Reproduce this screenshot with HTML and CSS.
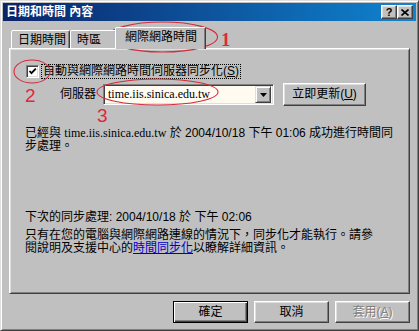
FILE: index.html
```html
<!DOCTYPE html>
<html>
<head>
<meta charset="utf-8">
<title>日期和時間 內容</title>
<link rel="stylesheet" href="styles.css">
</head>
<body>
<div class="window">
  <div class="titlebar">
    <span class="title">日期和時間 內容</span>
    <div class="caption-btns">
      <span class="cap-btn help">?</span>
      <span class="cap-btn close"><svg width="8" height="7" viewBox="0 0 8 7"><path d="M0.5 0.5 L7.5 6.5 M7.5 0.5 L0.5 6.5" stroke="#000" stroke-width="1.6" fill="none"/></svg></span>
    </div>
  </div>
  <div class="body">
    <div class="tabs">
      <div class="tab tab1">日期時間</div>
      <div class="tab tab2">時區</div>
      <div class="tab active">網際網路時間</div>
    </div>
    <div class="panel">
      <div class="check-row">
        <span class="checkbox"><svg width="9" height="9" viewBox="0 0 9 9"><path d="M1.5 4 L3.5 6.2 L7.8 1.6" stroke="#000" stroke-width="1.8" fill="none"/></svg></span>
        <span class="check-label">自動與網際網路時間伺服器同步化(<u>S</u>)</span>
      </div>
      <div class="server-row">
        <span class="server-label">伺服器</span>
        <div class="combo">
          <span class="combo-text">time.iis.sinica.edu.tw</span>
          <span class="combo-btn"><svg width="7" height="4" viewBox="0 0 7 4"><path d="M0 0 H7 L3.5 4 Z" fill="#000"/></svg></span>
        </div>
        <span class="btn update">立即更新(<u>U</u>)</span>
      </div>
      <p class="status">已經與 <span class="serif">time.iis.sinica.edu.tw</span> 於 2004/10/18 下午 01:06 成功進行時間同<br>步處理。</p>
      <p class="next">下次的同步處理: 2004/10/18 於 下午 02:06</p>
      <p class="info">只有在您的電腦與網際網路連線的情況下，同步化才能執行。請參<br>閱說明及支援中心的<a class="link" href="#">時間同步化</a>以瞭解詳細資訊。</p>
    </div>
    <div class="buttons">
      <span class="btn default">確定</span>
      <span class="btn">取消</span>
      <span class="btn disabled">套用(<u>A</u>)</span>
    </div>
  </div>
</div>
<svg class="annot" width="419" height="331" viewBox="0 0 419 331">
  <ellipse cx="162.5" cy="37" rx="55" ry="15" fill="none" stroke="#d42a3a" stroke-width="1.1"/>
  <text x="221" y="46" class="num serifnum">1</text>
  <ellipse cx="32" cy="71.5" rx="18" ry="11.5" fill="none" stroke="#d42a3a" stroke-width="1.1"/>
  <text x="25" y="102" class="num">2</text>
  <ellipse cx="157.5" cy="92" rx="60.5" ry="13" fill="none" stroke="#d42a3a" stroke-width="1.1"/>
  <text x="97" y="122" class="num">3</text>
</svg>
</body>
</html>
```

FILE: styles.css
```css
* { box-sizing: border-box; }
html, body { margin: 0; padding: 0; }
body {
  position: relative;
  width: 419px;
  height: 331px;
  overflow: hidden;
  background: #c0c0c0;
  font-family: "Liberation Sans", "Noto Sans CJK TC", sans-serif;
  font-size: 12px;
  color: #000;
}
.window {
  width: 419px;
  height: 331px;
  background: #c0c0c0;
  border: 1px solid;
  border-color: #dfdfdf #404040 #404040 #dfdfdf;
  box-shadow: inset 1px 1px #fff, inset -1px -1px #808080;
  padding: 2px;
  display: flex;
  flex-direction: column;
}
.titlebar {
  height: 18px;
  display: flex;
  align-items: center;
  background: linear-gradient(to right, #0a246a, #1084d0);
  padding: 0 3px 0 3px;
}
.title {
  flex: 1;
  color: #fff;
  font-weight: bold;
  line-height: 13px;
  white-space: nowrap;
}
.caption-btns { display: flex; }
.cap-btn {
  width: 16px;
  height: 14px;
  background: #c0c0c0;
  border: 1px solid;
  border-color: #fff #404040 #404040 #fff;
  box-shadow: inset -1px -1px #808080, inset 1px 1px #dfdfdf;
  display: flex;
  align-items: center;
  justify-content: center;
  font-weight: bold;
  font-size: 11px;
  line-height: 11px;
}
.body {
  flex: 1;
  padding: 6px 6px 5px 6px;
  display: flex;
  flex-direction: column;
}
.tabs {
  position: relative;
  z-index: 1;
  display: flex;
  align-items: flex-end;
  height: 21px;
  padding-left: 2px;
}
.tab {
  height: 18px;
  background: #c0c0c0;
  border: 1px solid;
  border-bottom: none;
  border-color: #fff #404040 transparent #fff;
  box-shadow: inset -1px 0 #808080;
  border-radius: 2px 2px 0 0;
  padding: 3px 0 0 6px;
  line-height: 13px;
  white-space: nowrap;
}
.tab1 { width: 59px; }
.tab2 { width: 47px; }
.tab.active {
  width: 91px;
  height: 22px;
  margin: 0 -2px -1px -2px;
  padding-left: 9px;
}
.panel {
  height: 246px;
  border: 1px solid;
  border-color: #fff #404040 #404040 #fff;
  box-shadow: inset 1px 1px #dfdfdf, inset -1px -1px #808080;
  padding: 15px 0 0 15px;
}
.check-row {
  display: flex;
  align-items: center;
  height: 15px;
}
.checkbox {
  width: 13px;
  height: 13px;
  margin-left: 1px;
  background: #fff;
  border: 1px solid;
  border-color: #808080 #fff #fff #808080;
  box-shadow: inset 1px 1px #404040, inset -1px -1px #dfdfdf;
  display: flex;
  align-items: center;
  justify-content: center;
}
.check-label {
  margin-left: 2px;
  border: 1px dotted #000;
  padding: 0 1px;
  line-height: 13px;
  white-space: nowrap;
}
.server-row {
  display: flex;
  align-items: center;
  height: 23px;
  margin-top: 4px;
  padding-left: 35px;
}
.server-label { width: 36px; line-height: 13px; white-space: nowrap; }
.combo {
  margin-left: 7px;
  width: 171px;
  height: 21px;
  background: #fffbf0;
  border: 1px solid;
  border-color: #808080 #fff #fff #808080;
  box-shadow: inset 1px 1px #404040, inset -1px -1px #dfdfdf;
  padding: 2px;
  display: flex;
  align-items: center;
}
.combo-text {
  flex: 1;
  padding-left: 2px;
  font-family: "Liberation Serif", "Noto Sans CJK TC", serif;
  font-size: 12px;
  line-height: 13px;
}
.combo-btn {
  width: 16px;
  height: 17px;
  background: #c0c0c0;
  border: 1px solid;
  border-color: #dfdfdf #404040 #404040 #dfdfdf;
  box-shadow: inset 1px 1px #fff, inset -1px -1px #808080;
  display: flex;
  align-items: center;
  justify-content: center;
}
.btn {
  display: flex;
  align-items: center;
  justify-content: center;
  width: 75px;
  height: 22px;
  background: #c0c0c0;
  border: 1px solid;
  border-color: #fff #404040 #404040 #fff;
  box-shadow: inset -1px -1px #808080, inset 1px 1px #dfdfdf;
  line-height: 13px;
  white-space: nowrap;
}
.btn.update {
  margin-left: 9px;
  width: 83px;
  height: 23px;
}
.btn.default {
  border: 1px solid #000;
  box-shadow: inset 1px 1px #fff, inset -1px -1px #404040, inset -2px -2px #808080;
}
.btn.disabled {
  color: #808080;
  text-shadow: 1px 1px #fff;
}
.status, .next, .info {
  margin: 0;
  line-height: 13px;
  white-space: nowrap;
}
.status { margin-top: 21px; }
.next { margin-top: 58px; }
.info { margin-top: 5px; }
.serif { font-family: "Liberation Serif", "Noto Sans CJK TC", serif; }
.link { color: #0000cc; text-decoration: underline; }
.buttons {
  display: flex;
  justify-content: flex-end;
  gap: 6px;
  margin-top: 7px;
}
.annot {
  position: absolute;
  top: 0;
  left: 0;
  pointer-events: none;
}
.num {
  fill: #e0283a;
  font-family: "Liberation Sans", sans-serif;
  font-size: 19px;
}
.serifnum {
  font-family: "Liberation Serif", serif;
  font-size: 19px;
  font-weight: bold;
}
```
